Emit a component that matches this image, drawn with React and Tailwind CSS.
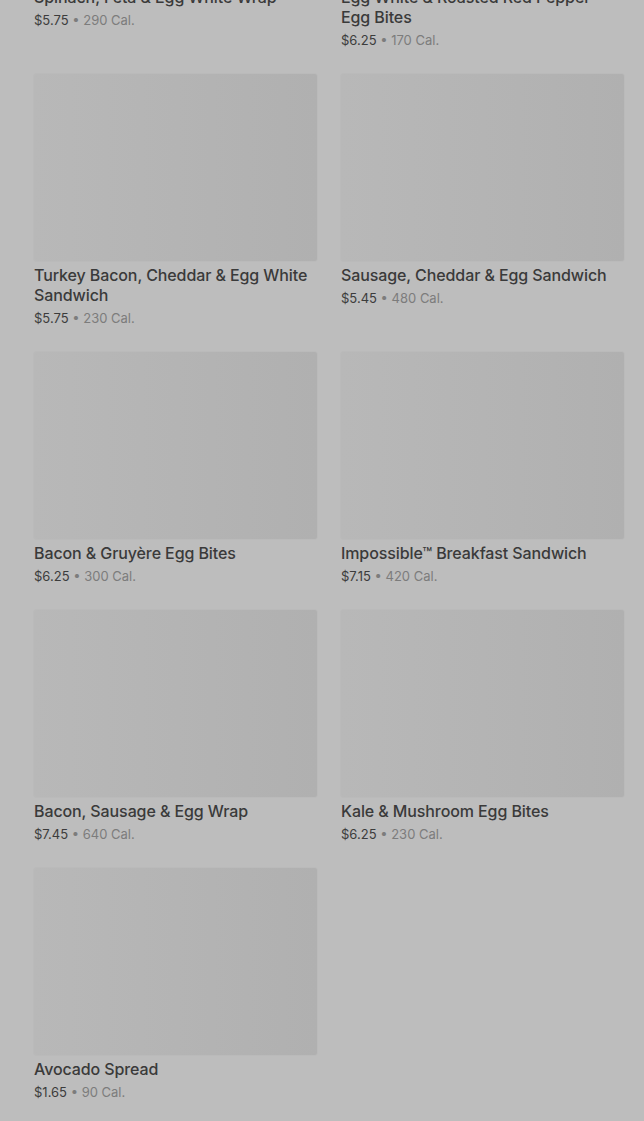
const items = [
  { name: 'Spinach, Feta & Egg White Wrap', price: '$5.75', cal: '290 Cal.' },
  { name: 'Egg White & Roasted Red Pepper Egg Bites', price: '$6.25', cal: '170 Cal.' },
  { name: 'Turkey Bacon, Cheddar & Egg White Sandwich', price: '$5.75', cal: '230 Cal.' },
  { name: 'Sausage, Cheddar & Egg Sandwich', price: '$5.45', cal: '480 Cal.' },
  { name: 'Bacon & Gruyère Egg Bites', price: '$6.25', cal: '300 Cal.' },
  { name: 'Impossible™ Breakfast Sandwich', price: '$7.15', cal: '420 Cal.' },
  { name: 'Bacon, Sausage & Egg Wrap', price: '$7.45', cal: '640 Cal.' },
  { name: 'Kale & Mushroom Egg Bites', price: '$6.25', cal: '230 Cal.' },
  { name: 'Avocado Spread', price: '$1.65', cal: '90 Cal.' },
]

function MenuCard({ item }) {
  return (
    <div className="flex flex-col pb-[25px]">
      <div className="h-[187px] w-full rounded-[2px] bg-gradient-to-r from-[#b8b8b8] via-[#b4b4b4] to-[#b0b0b0] shadow-[0_0_2px_rgba(0,0,0,0.06)]" />
      <div className="mt-[4px] pr-[4px] text-[16px] leading-5 font-medium tracking-[-0.1px] text-[#3a3a3a]">{item.name}</div>
      <div className="mt-[4px] text-[13px] leading-[18px] text-[#3c3c3c]">
        {item.price}
        <span className="text-[#7c7c7c]"> • {item.cal}</span>
      </div>
    </div>
  )
}

export default function App() {
  return (
    <div className="h-[1121px] overflow-hidden bg-[#bdbdbd]" style={{ fontFamily: 'Inter, "Noto Sans", sans-serif' }}>
      <div className="mt-[-204px] pl-[34px] pr-[20px]">
        <div className="grid grid-cols-2 gap-x-6">
          {items.map((item) => (
            <MenuCard key={item.name} item={item} />
          ))}
        </div>
      </div>
    </div>
  )
}
